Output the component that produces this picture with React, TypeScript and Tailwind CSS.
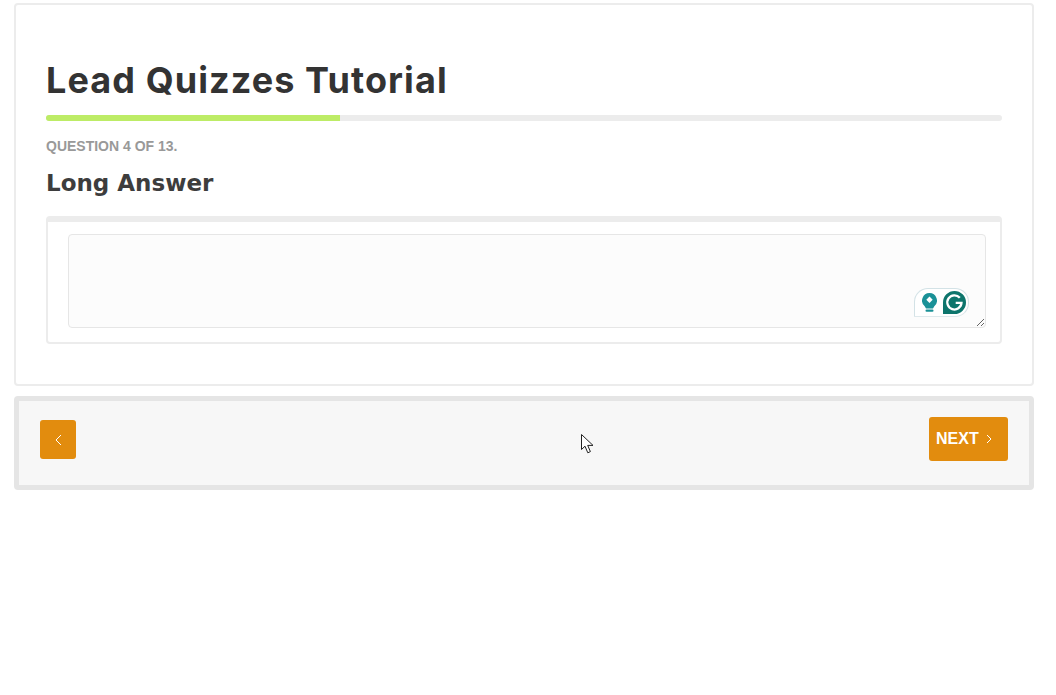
import React from 'react';

const GrammarlyBadge: React.FC = () => (
  <div className="absolute right-[17px] bottom-[11px] w-[55px] h-[29px] bg-white border border-[#d3e2e6] border-b-[#dfe9ec] rounded-tl-[14px] rounded-r-[14px] flex items-center pl-[7px] gap-[6px]">
    <svg width="15" height="19" viewBox="0 0 15 19">
      <path d="M7.5 0a7.5 7.5 0 0 1 4.8 13.2L11 15.5H4L2.7 13.2A7.5 7.5 0 0 1 7.5 0z" fill="#1a9197" />
      <path d="M7.5 3.6l3.2 3.2-3.2 3.2-3.2-3.2z" fill="#fff" />
      <rect x="3.5" y="16.6" width="8" height="2.2" rx="1.1" fill="#1a9197" />
    </svg>
    <svg width="23" height="23" viewBox="0 0 23 23">
      <path d="M11.5 0a11.5 11.5 0 0 1 0 23H0V11.5A11.5 11.5 0 0 1 11.5 0z" fill="#0d756c" />
      <path d="M16.8 6.8a7.1 7.1 0 1 0 1.7 5h-5.8" fill="none" stroke="#fff" strokeWidth="2.3" />
    </svg>
  </div>
);

const Cursor: React.FC = () => (
  <svg className="absolute left-[581px] top-[434px]" width="14" height="20" viewBox="0 0 14 20">
    <path d="M0.5 0.5V15.5L4 12.2L6.8 18.8L9.4 17.6L6.7 11.4H12z" fill="#fff" stroke="#222" strokeWidth="1" />
  </svg>
);

export default function App() {
  const progress = (4 / 13) * 100;

  return (
    <div className="relative min-h-[695px] bg-white pl-[14px] pr-[22px] pt-[3px] font-['Liberation_Sans',sans-serif]">
      <div className="h-[383px] border-2 border-[#ececec] rounded-[4px] px-[30px] pt-[50px]">
        <h1 className="text-[36px] leading-[50px] font-bold text-[#333] font-['Inter',sans-serif] tracking-[1.08px]">Lead Quizzes Tutorial</h1>
        <div className="mt-[10px] h-[6px] bg-[#ececec] rounded-full overflow-hidden">
          <div className="h-full bg-[#bdec66]" style={{ width: `${progress}%` }} />
        </div>
        <div className="mt-[17px] text-[14px] leading-[16px] font-bold text-[#999]">QUESTION 4 OF 13.</div>
        <h2 className="mt-[15px] text-[23px] leading-[29px] font-bold text-[#3d3d3d] font-['DejaVu_Sans',sans-serif]">Long Answer</h2>
        <div className="mt-[18px] h-[128px] border-2 border-t-[6px] border-[#ececec] rounded-[4px] pl-[20px] pr-[14px] pt-[12px]">
          <div className="relative h-[94px]">
            <textarea className="block w-full h-full bg-[#fcfcfc] border border-[#e6e6e6] rounded-[4px] resize-y outline-none" />
            <GrammarlyBadge />
          </div>
        </div>
      </div>
      <div className="mt-[10px] h-[94px] bg-[#f7f7f7] border-[5px] border-[#e5e5e5] rounded-[4px] px-[21px] flex items-start justify-between">
        <button className="w-[36px] h-[39px] mt-[19px] bg-[#e28c0e] rounded-[3px] flex items-center justify-center text-white text-[14px]">
          <svg width="7" height="12" viewBox="0 0 7 12"><path d="M6 1L1 6l5 5" fill="none" stroke="#fff" strokeWidth="1" /></svg>
        </button>
        <button className="w-[79px] h-[44px] mt-[16px] bg-[#e28c0e] rounded-[3px] flex items-center pl-[7px] gap-[7px] text-white text-[16px] font-bold">
          NEXT
          <svg width="6" height="10" viewBox="0 0 6 10"><path d="M1 1l4 4-4 4" fill="none" stroke="#fff" strokeWidth="1" /></svg>
        </button>
      </div>
      <Cursor />
    </div>
  );
}
